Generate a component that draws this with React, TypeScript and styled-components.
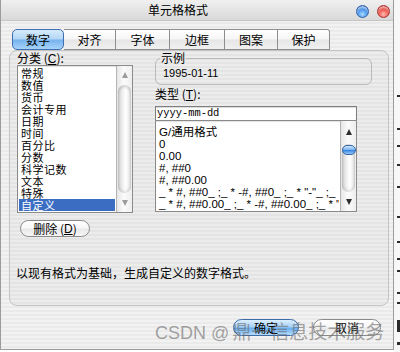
import React from "react";
import styled, { createGlobalStyle, css } from "styled-components";

const GlobalStyle = createGlobalStyle`
  html, body { margin: 0; padding: 0; background: #ffffff; }
  body {
    font-family: "Noto Sans CJK SC", "Liberation Sans", sans-serif;
    font-size: 12px;
    color: #000;
  }
  * { box-sizing: border-box; }
`;

const Screen = styled.div`
  position: relative;
  width: 400px;
  height: 352px;
  overflow: hidden;
  display: flex;
  align-items: flex-start;
  background: #ffffff;
`;

const Window = styled.div`
  width: 394px;
  height: 350px;
  flex: none;
  display: flex;
  flex-direction: column;
  border: 1px solid #9c9c9c;
  border-top: none;
  background: repeating-linear-gradient(
    to bottom,
    #f2f2f2 0px,
    #f2f2f2 2px,
    #eaeaea 2px,
    #eaeaea 4px
  );
`;

const TitleBar = styled.div`
  height: 21px;
  flex: none;
  position: relative;
  display: flex;
  align-items: center;
  justify-content: center;
  padding-right: 38px;
  border-bottom: 1px solid #c4c4c4;
  background: linear-gradient(#f0f0f0, #e2e2e2 60%, #d9d9d9);
  font-size: 12px;
  line-height: 14px;
`;

const Lights = styled.div`
  position: absolute;
  right: 3px;
  top: 5px;
  display: flex;
  gap: 8px;
`;

const Light = styled.span<{ $color: "blue" | "red" }>`
  width: 13px;
  height: 13px;
  border-radius: 50%;
  border: 1px solid ${(p) => (p.$color === "blue" ? "#2f5fa8" : "#a8302c")};
  background: ${(p) =>
    p.$color === "blue"
      ? "radial-gradient(circle at 50% 75%, #a9dcff 0%, #4f98ea 45%, #1f5fc0 100%)"
      : "radial-gradient(circle at 50% 75%, #ffc0b8 0%, #ef5a50 45%, #b8221c 100%)"};
  box-shadow: inset 0 2px 2px rgba(255, 255, 255, 0.6);
`;

const TabRow = styled.div`
  display: flex;
  margin: 8px 0 0 11px;
  height: 21px;
  flex: none;
`;

const Tab = styled.div<{ $active?: boolean; $w: number; $last?: boolean }>`
  width: ${(p) => p.$w}px;
  height: 21px;
  display: flex;
  align-items: center;
  justify-content: center;
  font-size: 12px;
  line-height: 14px;
  border: 1px solid #8e8e8e;
  border-left: none;
  background: linear-gradient(#ffffff, #f6f6f6 48%, #e6e6e6 52%, #f0f0f0);
  ${(p) =>
    p.$last &&
    css`
      border-top-right-radius: 3px;
    `}
  ${(p) =>
    p.$active &&
    css`
      border: 1px solid #3f6fb2;
      border-radius: 5px;
      background: linear-gradient(#d6ebfc, #b2d6f6 48%, #75b2ee 52%, #a6d3fa);
    `}
`;

const Panel = styled.div`
  margin-left: 8px;
  width: 380px;
  height: 256px;
  flex: none;
  border: 1px solid #c3c3c3;
  border-radius: 8px;
  background: rgba(0, 0, 0, 0.022);
  padding: 0 7px;
  display: flex;
  flex-direction: column;
`;

const Columns = styled.div`
  display: grid;
  grid-template-columns: 116px 217px;
  column-gap: 22px;
  align-items: start;
`;

const Column = styled.div`
  display: flex;
  flex-direction: column;
  align-items: flex-start;
`;

const FieldLabel = styled.div<{ $top?: number }>`
  line-height: ${(p) => (p.$top !== undefined ? 12 : 14)}px;
  height: ${(p) => (p.$top !== undefined ? 12 : 14)}px;
  margin-top: ${(p) => p.$top ?? 0}px;
  font-size: 12px;
  white-space: pre;
  u {
    font-family: "Liberation Sans", sans-serif;
  }
`;

const ListBox = styled.div<{ $w: number; $h: number }>`
  width: ${(p) => p.$w}px;
  height: ${(p) => p.$h}px;
  border: 1px solid #8a8a8a;
  background: #ffffff;
  display: flex;
  box-shadow: inset 0 1px 1px rgba(0, 0, 0, 0.12);
`;

const Items = styled.div<{ $padTop: number }>`
  flex: 1;
  min-width: 0;
  overflow: hidden;
  padding: ${(p) => p.$padTop}px 1px 0 1px;
  display: flex;
  flex-direction: column;
`;

const Item = styled.div<{ $selected?: boolean; $latin?: boolean }>`
  height: 12px;
  flex: none;
  line-height: 12px;
  padding-left: 2px;
  white-space: pre;
  overflow: hidden;
  font-size: ${(p) => (p.$latin ? 11.5 : 11)}px;
  letter-spacing: ${(p) => (p.$latin ? 0 : 0.5)}px;
  font-family: ${(p) =>
    p.$latin
      ? '"Liberation Sans", "Noto Sans CJK SC", sans-serif'
      : '"Noto Sans CJK SC", "Liberation Sans", sans-serif'};
  ${(p) =>
    p.$selected &&
    css`
      background: #3b6ec3;
      color: #ffffff;
    `}
`;

const ScrollBar = styled.div`
  width: 16px;
  flex: none;
  display: flex;
  flex-direction: column;
  border-left: 1px solid #b4b4b4;
  background: linear-gradient(to right, #e6e6e6, #fbfbfb 45%, #eeeeee);
`;

const ArrowCell = styled.div<{ $h: number }>`
  height: ${(p) => p.$h}px;
  flex: none;
  display: flex;
  align-items: center;
  justify-content: center;
`;

const Arrow = styled.span<{ $dir: "up" | "down"; $dim?: boolean }>`
  width: 0;
  height: 0;
  border-left: 3.5px solid transparent;
  border-right: 3.5px solid transparent;
  ${(p) =>
    p.$dir === "up"
      ? css`
          border-bottom: 6px solid ${p.$dim ? "#9c9c9c" : "#2e2e2e"};
        `
      : css`
          border-top: 6px solid ${p.$dim ? "#9c9c9c" : "#2e2e2e"};
        `}
`;

const Track = styled.div`
  flex: 1;
  margin: 1px 1px;
  border-radius: 7px;
  background: linear-gradient(to right, #d2d2d2, #f3f3f3 40%, #ffffff 60%, #e2e2e2);
  box-shadow: inset 0 2px 3px rgba(0, 0, 0, 0.16), inset 0 -2px 3px rgba(0, 0, 0, 0.1);
  display: flex;
  flex-direction: column;
  align-items: center;
  padding-top: 1px;
`;

const Thumb = styled.div`
  width: 14px;
  height: 10px;
  border-radius: 5px;
  border: 1px solid #3766a6;
  background: linear-gradient(#cfe6fc, #7db6f2 45%, #3b86df 55%, #92c8f8);
`;

const PillButton = styled.div<{ $w: number; $primary?: boolean }>`
  width: ${(p) => p.$w}px;
  height: 17px;
  border-radius: 9px;
  border: 1px solid #8a8a8a;
  display: flex;
  align-items: center;
  justify-content: center;
  font-size: 12px;
  line-height: 12px;
  background: linear-gradient(#ffffff, #f7f7f7 48%, #e8e8e8 52%, #f6f6f6);
  u {
    font-family: "Liberation Sans", sans-serif;
  }
  ${(p) =>
    p.$primary &&
    css`
      border-color: #3f6aa8;
      background: linear-gradient(#dcefff, #a8d2f8 45%, #6aaef0 55%, #b4dcfd);
    `}
`;

const DeleteButton = styled(PillButton)`
  margin: 7px 0 0 3px;
`;

const GroupBox = styled.fieldset`
  margin: 0;
  width: 217px;
  padding: 0 0 5px 7px;
  border: 1px solid #b9b9b9;
  border-radius: 6px;
  min-width: 0;
`;

const Legend = styled.legend`
  font-size: 12px;
  line-height: 14px;
  padding: 0 1px;
  margin-left: -3px;
`;

const SampleValue = styled.div`
  margin-top: 2px;
  height: 12px;
  line-height: 12px;
  font-family: "Liberation Sans", sans-serif;
  font-size: 11px;
`;

const TextInput = styled.div`
  margin-top: 6px;
  width: 202px;
  height: 15px;
  border: 1px solid #7e7e7e;
  background: #ffffff;
  padding-left: 1px;
  font-family: "Liberation Mono", monospace;
  font-size: 10.4px;
  line-height: 13px;
  box-shadow: inset 0 1px 1px rgba(0, 0, 0, 0.15);
`;

const FormatBox = styled(ListBox)`
  margin-top: -1px;
`;

const Description = styled.div`
  margin: 30px 0 0 -1px;
  height: 12px;
  line-height: 12px;
  font-size: 12px;
`;

const Footer = styled.div`
  display: flex;
  justify-content: flex-end;
  gap: 14px;
  margin-top: 13px;
  padding-right: 12px;
`;

const Watermark = styled.div`
  position: absolute;
  left: 155px;
  top: 320px;
  display: flex;
  align-items: baseline;
  color: rgba(105, 105, 105, 0.6);
  font-size: 19px;
  line-height: 22px;
  white-space: pre;
  pointer-events: none;
`;

const WatermarkLatin = styled.span`
  font-family: "Liberation Sans", sans-serif;
  font-size: 18px;
  margin-right: 3px;
`;

const SideStrip = styled.div`
  flex: 1;
  height: 352px;
  display: flex;
  flex-direction: column;
  align-items: flex-end;
  background: #f7f7f7;
`;

const StripMark = styled.span`
  width: 3px;
  flex: none;
  background: #2a2a2a;
`;

const categories = [
  "常规",
  "数值",
  "货币",
  "会计专用",
  "日期",
  "时间",
  "百分比",
  "分数",
  "科学记数",
  "文本",
  "特殊",
  "自定义",
];

const formats = [
  "G/通用格式",
  "0",
  "0.00",
  "#, ##0",
  "#, ##0.00",
  '_ * #, ##0_ ;_ * -#, ##0_ ;_ * "-"_ ;_ @_',
  "_ * #, ##0.00_ ;_ * -#, ##0.00_ ;_ * \"-\"??_ ;_ @_",
];

const tabs = [
  { label: "数字", w: 52 },
  { label: "对齐", w: 52 },
  { label: "字体", w: 54 },
  { label: "边框", w: 55 },
  { label: "图案", w: 53 },
  { label: "保护", w: 52 },
];

const marks = [
  { gap: 95, h: 2 },
  { gap: 31, h: 2 },
  { gap: 15, h: 2 },
  { gap: 17, h: 2 },
  { gap: 20, h: 2 },
  { gap: 28, h: 2 },
  { gap: 23, h: 2 },
  { gap: 15, h: 2 },
  { gap: 10, h: 2 },
  { gap: 20, h: 2 },
  { gap: 8, h: 2 },
  { gap: 16, h: 12 },
  { gap: 10, h: 3 },
];

export default function App() {
  return (
    <>
      <GlobalStyle />
      <Screen>
        <Window>
          <TitleBar>
            单元格格式
            <Lights>
              <Light $color="blue" />
              <Light $color="red" />
            </Lights>
          </TitleBar>
          <TabRow>
            {tabs.map((t, i) => (
              <Tab key={t.label} $w={t.w} $active={i === 0} $last={i === tabs.length - 1}>
                {t.label}
              </Tab>
            ))}
          </TabRow>
          <Panel>
            <Columns>
              <Column>
                <FieldLabel>
                  分类 (<u>C</u>):
                </FieldLabel>
                <ListBox $w={116} $h={148}>
                  <Items $padTop={1}>
                    {categories.map((c, i) => (
                      <Item key={c} $selected={i === categories.length - 1}>
                        {c}
                      </Item>
                    ))}
                  </Items>
                  <ScrollBar>
                    <ArrowCell $h={18}>
                      <Arrow $dir="up" $dim />
                    </ArrowCell>
                    <Track />
                    <ArrowCell $h={18}>
                      <Arrow $dir="down" $dim />
                    </ArrowCell>
                  </ScrollBar>
                </ListBox>
                <DeleteButton $w={70}>
                  删除 (<u>D</u>)
                </DeleteButton>
              </Column>
              <Column>
                <GroupBox>
                  <Legend>示例</Legend>
                  <SampleValue>1995-01-11</SampleValue>
                </GroupBox>
                <FieldLabel $top={3}>
                  类型 (<u>T</u>):
                </FieldLabel>
                <TextInput>yyyy-mm-dd</TextInput>
                <FormatBox $w={202} $h={92}>
                  <Items $padTop={5}>
                    {formats.map((f) => (
                      <Item key={f} $latin>
                        {f}
                      </Item>
                    ))}
                  </Items>
                  <ScrollBar>
                    <ArrowCell $h={22}>
                      <Arrow $dir="up" />
                    </ArrowCell>
                    <Track>
                      <Thumb />
                    </Track>
                    <ArrowCell $h={18}>
                      <Arrow $dir="down" />
                    </ArrowCell>
                  </ScrollBar>
                </FormatBox>
              </Column>
            </Columns>
            <Description>以现有格式为基础，生成自定义的数字格式。</Description>
          </Panel>
          <Footer>
            <PillButton $w={66} $primary>
              确定
            </PillButton>
            <PillButton $w={68}>取消</PillButton>
          </Footer>
        </Window>
        <SideStrip>
          {marks.map((m, i) => (
            <StripMark key={i} style={{ marginTop: m.gap, height: m.h }} />
          ))}
        </SideStrip>
        <Watermark>
          <WatermarkLatin>CSDN @</WatermarkLatin>鼎一信息技术服务
        </Watermark>
      </Screen>
    </>
  );
}
